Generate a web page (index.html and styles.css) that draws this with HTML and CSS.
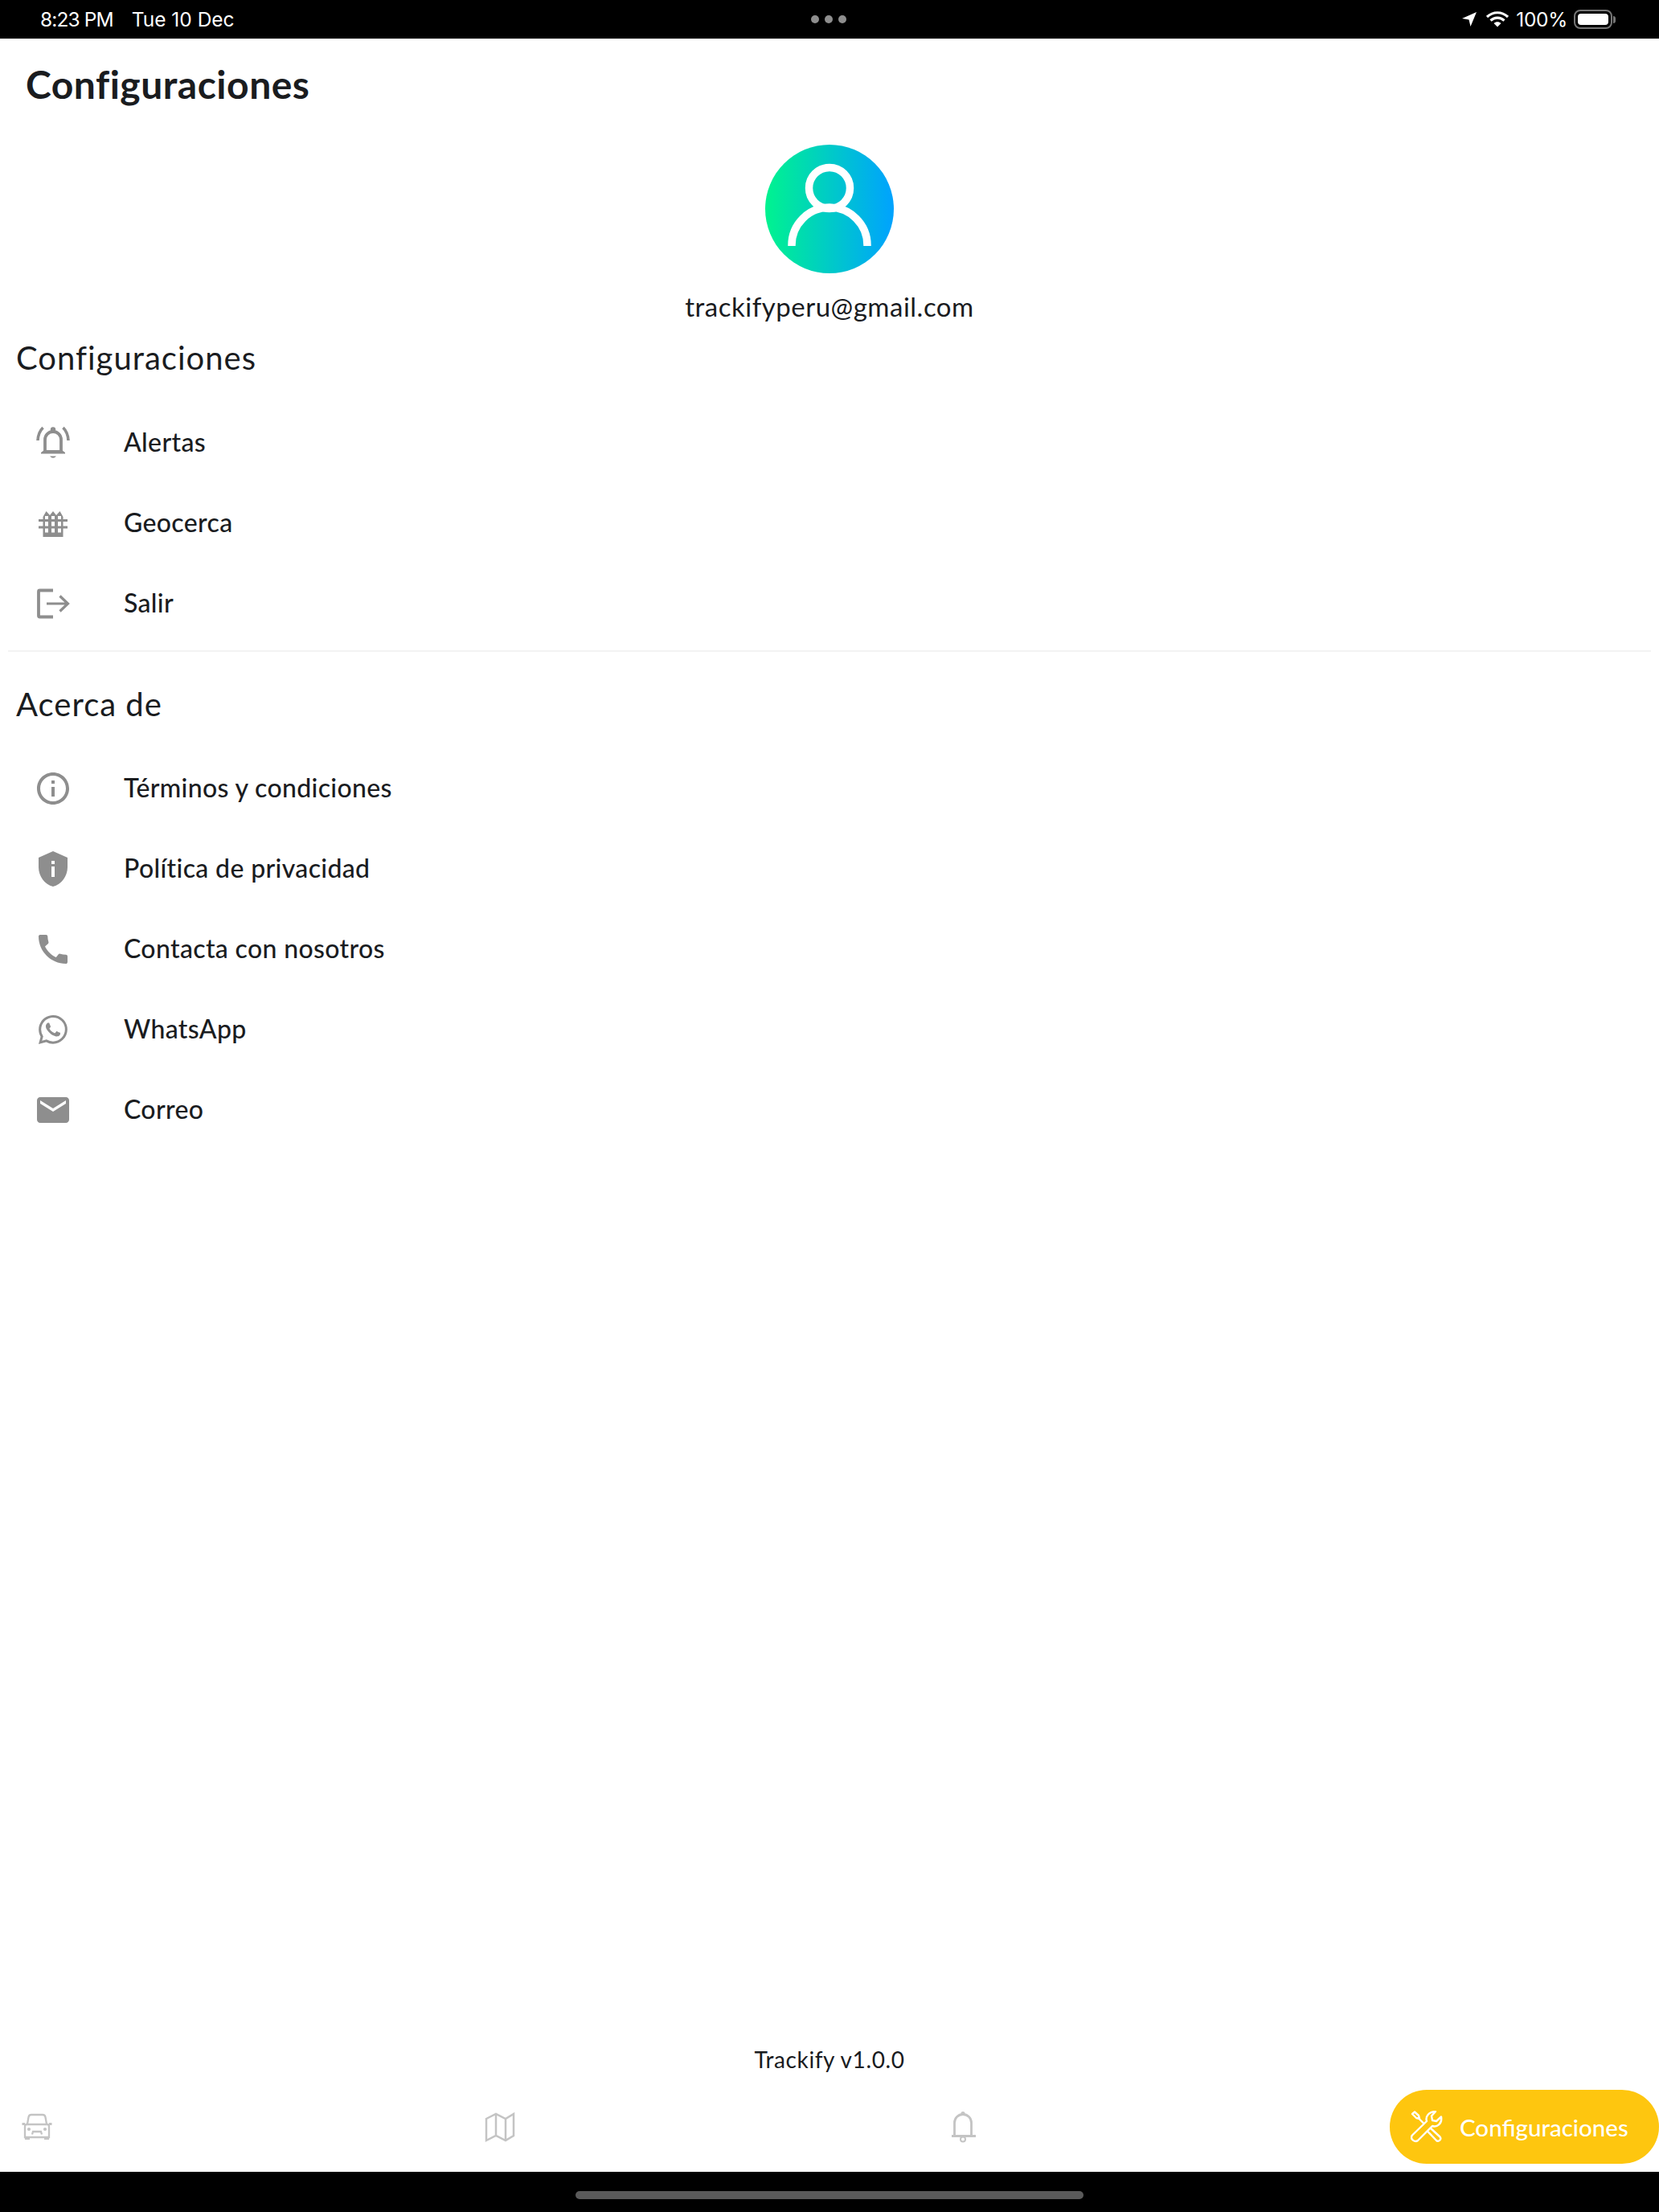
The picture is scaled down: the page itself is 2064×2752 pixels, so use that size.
FILE: index.html
```html
<!DOCTYPE html>
<html lang="en">
<head>
  <meta charset="UTF-8">
  <title>Trackify - Configuraciones</title>
  <link rel="stylesheet" href="styles.css">
</head>
<body>
  <div class="page">
    <div class="status-bar">
      <div class="status-left"><span class="status-time">8:23 PM</span><span>Tue 10 Dec</span></div>
      <div class="status-dots"><i></i><i></i><i></i></div>
      <div class="status-right">
        <svg class="status-arrow" viewBox="0 0 18 18"><path d="M18 0 L0 8 L8.5 9.5 L10.5 18 Z" fill="#fff"/></svg>
        <svg class="status-wifi" viewBox="0 0 28 20"><path d="M1 7 C8.5 0 19.5 0 27 7 M5.5 11.5 C10.5 7 17.5 7 22.5 11.5" fill="none" stroke="#fff" stroke-width="3.2"/><path d="M9.5 15 C12 12.6 16 12.6 18.5 15 L14 19.5 Z" fill="#fff"/></svg>
        <span class="status-pct">100%</span>
        <div class="battery"><div class="battery-fill"></div></div>
        <div class="battery-nub"></div>
      </div>
    </div>

    <div class="header"><h1 class="title">Configuraciones</h1></div>

    <div class="profile">
      <svg class="avatar" viewBox="0 0 160 160">
        <defs>
          <linearGradient id="avatarGrad" x1="0" y1="0" x2="1" y2="0">
            <stop offset="0" stop-color="#00f38f"/>
            <stop offset="1" stop-color="#00a2ff"/>
          </linearGradient>
        </defs>
        <circle cx="80" cy="80" r="80" fill="url(#avatarGrad)"/>
        <circle cx="80" cy="54" r="25.5" fill="none" stroke="#fff" stroke-width="9.5"/>
        <path d="M33 126 V125 A47 47 0 0 1 127 125 V126" fill="none" stroke="#fff" stroke-width="9.5"/>
      </svg>
      <div class="email">trackifyperu@gmail.com</div>
    </div>

    <h2 class="section-title">Configuraciones</h2>
    <div class="rows">
      <div class="row">
        <svg class="row-icon" viewBox="0 0 48 48">
          <path d="M14 36 V20 A10 10 0 0 1 34 20 V36" fill="none" stroke="#8e8e8e" stroke-width="3.8"/>
          <path d="M9 36 L13 33 H35 L39 36 V37.5 H9 Z" fill="#8e8e8e"/>
          <circle cx="24" cy="7.5" r="3.2" fill="#8e8e8e"/>
          <path d="M20 40.5 H28 Q24 45 20 40.5 Z" fill="#8e8e8e"/>
          <path d="M5 21 Q5.5 11 11.5 5 M43 21 Q42.5 11 36.5 5" fill="none" stroke="#8e8e8e" stroke-width="3.6"/>
        </svg>
        <span>Alertas</span>
      </div>
      <div class="row">
        <svg class="row-icon" viewBox="0 0 48 48">
          <path d="M11.5 41 V16 L15.5 9 L20 14 L24 9 L28 14 L32.5 9 L36.5 16 V41 Z" fill="#8e8e8e"/>
          <path d="M6 19 H42 V22 H6 Z M6 27.5 H42 V30.5 H6 Z" fill="#8e8e8e"/>
          <path d="M14 15 H18 V19 H14 Z M22 15 H26 V19 H22 Z M30 15 H34 V19 H30 Z M14 22 H18 V27.5 H14 Z M22 22 H26 V27.5 H22 Z M30 22 H34 V27.5 H30 Z M14 30.5 H18 V35.5 H14 Z M22 30.5 H26 V35.5 H22 Z M30 30.5 H34 V35.5 H30 Z" fill="#fff"/>
        </svg>
        <span>Geocerca</span>
      </div>
      <div class="row">
        <svg class="row-icon" viewBox="0 0 48 48">
          <path d="M24 7.5 H7.5 A1.5 1.5 0 0 0 6 9 V39 A1.5 1.5 0 0 0 7.5 40.5 H24" fill="none" stroke="#8e8e8e" stroke-width="3.8"/>
          <path d="M16 24 H42 M32.5 14.5 L42.5 24 L32.5 33.5" fill="none" stroke="#8e8e8e" stroke-width="3.2"/>
        </svg>
        <span>Salir</span>
      </div>
    </div>

    <div class="divider"></div>

    <h2 class="section-title section-about">Acerca de</h2>
    <div class="rows">
      <div class="row">
        <svg class="row-icon" viewBox="0 0 24 24"><path fill="#8e8e8e" d="M11 7h2v2h-2zm0 4h2v6h-2zm1-9C6.48 2 2 6.48 2 12s4.48 10 10 10 10-4.48 10-10S17.52 2 12 2zm0 18c-4.41 0-8-3.59-8-8s3.59-8 8-8 8 3.59 8 8-3.59 8-8 8z"/></svg>
        <span>Términos y condiciones</span>
      </div>
      <div class="row">
        <svg class="row-icon" viewBox="0 0 24 24"><path fill="#8e8e8e" fill-rule="evenodd" d="M12 1L3 5v6c0 5.55 3.84 10.74 9 12 5.16-1.26 9-6.45 9-12V5l-9-4zM11 7h2v2h-2zM11 10.5h2V17h-2z"/></svg>
        <span>Política de privacidad</span>
      </div>
      <div class="row">
        <svg class="row-icon" viewBox="0 0 24 24"><path fill="#8e8e8e" d="M20.01 15.38c-1.23 0-2.42-.2-3.53-.56-.35-.12-.74-.03-1.01.24l-1.57 1.97c-2.83-1.35-5.48-3.9-6.89-6.83l1.95-1.66c.27-.28.35-.67.24-1.02-.37-1.11-.56-2.3-.56-3.53 0-.54-.45-.99-.99-.99H4.19C3.65 3 3 3.24 3 3.99 3 13.28 10.73 21 20.01 21c.71 0 .99-.63.99-1.18v-3.45c0-.54-.45-.99-.99-.99z"/></svg>
        <span>Contacta con nosotros</span>
      </div>
      <div class="row">
        <svg class="row-icon" viewBox="-2.67 -2.67 21.33 21.33"><path fill="#8e8e8e" d="M13.601 2.326A7.854 7.854 0 0 0 7.994 0C3.627 0 .068 3.558.064 7.926c0 1.399.366 2.76 1.057 3.965L0 16l4.204-1.102a7.933 7.933 0 0 0 3.79.965h.004c4.368 0 7.926-3.558 7.93-7.93A7.898 7.898 0 0 0 13.6 2.326zM7.994 14.521a6.573 6.573 0 0 1-3.356-.92l-.24-.144-2.494.654.666-2.433-.156-.251a6.56 6.56 0 0 1-1.007-3.505c0-3.626 2.957-6.584 6.591-6.584a6.56 6.56 0 0 1 4.66 1.931 6.557 6.557 0 0 1 1.928 4.66c-.004 3.639-2.961 6.592-6.592 6.592zm3.615-4.934c-.197-.099-1.17-.578-1.353-.646-.182-.065-.315-.099-.445.099-.133.197-.513.646-.627.775-.114.133-.232.148-.43.05-.197-.1-.836-.308-1.592-.985-.59-.525-.985-1.175-1.103-1.372-.114-.198-.011-.304.088-.403.087-.088.197-.232.296-.346.1-.114.133-.198.198-.33.065-.134.034-.248-.015-.347-.05-.099-.445-1.076-.612-1.47-.16-.389-.323-.335-.445-.34-.114-.007-.247-.007-.38-.007a.729.729 0 0 0-.529.247c-.182.198-.691.677-.691 1.654 0 .977.71 1.916.81 2.049.098.133 1.394 2.132 3.383 2.992.47.205.84.326 1.129.418.475.152.904.129 1.246.08.38-.058 1.171-.48 1.338-.943.164-.464.164-.86.114-.943-.049-.084-.182-.133-.38-.232z"/></svg>
        <span>WhatsApp</span>
      </div>
      <div class="row">
        <svg class="row-icon" viewBox="0 0 24 24"><path fill="#8e8e8e" d="M20 4H4c-1.1 0-2 .9-2 2v12c0 1.1.9 2 2 2h16c1.1 0 2-.9 2-2V6c0-1.1-.9-2-2-2zm0 4l-8 5-8-5V6l8 5 8-5v2z"/></svg>
        <span>Correo</span>
      </div>
    </div>

    <div class="version">Trackify v1.0.0</div>

    <div class="tab-bar">
      <svg class="tab-icon" viewBox="0 0 48 48">
        <g fill="none" stroke="#c4c4c4" stroke-width="2.3">
          <path d="M12 20.5 L13.5 12 Q14 9 17 9 H31 Q34 9 34.5 12 L36 20.5"/>
          <path d="M11 21 H37 Q39 21 39 24 V37 H9 V24 Q9 21 11 21 Z"/>
          <path d="M18 33.5 L19 30 H29 L30 33.5"/>
        </g>
        <path d="M5.5 19 H9 V22 H5.5 Z M39 19 H42.5 V22 H39 Z M9 36 H15 V40 H9 Z M33 36 H39 V40 H33 Z" fill="#c4c4c4"/>
        <circle cx="14" cy="27" r="2.1" fill="#c4c4c4"/>
        <circle cx="34" cy="27" r="2.1" fill="#c4c4c4"/>
      </svg>
      <svg class="tab-icon" viewBox="0 0 48 48">
        <path d="M7 14 L19 8 L31 14 L41 8 V35 L31 41 L19 35 L7 41 Z M19 8 V35 M31 14 V41" fill="none" stroke="#c4c4c4" stroke-width="2.5"/>
      </svg>
      <svg class="tab-icon" viewBox="0 0 48 48">
        <path d="M13.5 35 V19 A10.5 10.5 0 0 1 34.5 19 V35 M10 35.5 H40" fill="none" stroke="#c4c4c4" stroke-width="2.8"/>
        <circle cx="24" cy="7.5" r="2.6" fill="#c4c4c4"/>
        <circle cx="24" cy="39.5" r="3" fill="none" stroke="#c4c4c4" stroke-width="2"/>
      </svg>
      <div class="tab-active">
        <svg class="tab-tools" viewBox="0 0 40 40">
          <g fill="none" stroke="#fff" stroke-width="2.4" stroke-linejoin="round">
            <path d="M2 4 L5 1.5 L10 6 L11 10 L7 9 Z M10.5 10 L16.5 16"/>
            <path d="M24 21 L36.5 32.5 A3.2 3.2 0 0 1 32 37 L20.5 25"/>
            <path d="M2 30.5 L20 13 C18 7 23 1 31 1 L26 6.5 L27 12 L32 13 L38 7.5 C39.5 16 33 21 27 19 L9 37 C5.5 40 -1.5 35 2 30.5 Z"/>
          </g>
        </svg>
        <span>Configuraciones</span>
      </div>
    </div>

    <div class="home-bar"><div class="home-indicator"></div></div>
  </div>
</body>
</html>
```

FILE: styles.css
```css
* {
  box-sizing: border-box;
  margin: 0;
  padding: 0;
}
body {
  font-family: Lato, "Open Sans", sans-serif;
  background-color: #fff;
  color: #1a1c1f;
}
.page {
  display: flex;
  flex-direction: column;
  width: 2064px;
  height: 2752px;
  overflow: hidden;
}

/* status bar */
.status-bar {
  display: grid;
  grid-template-columns: 1fr auto 1fr;
  align-items: center;
  height: 48px;
  padding: 0 54px 0 50px;
  background-color: #000;
  color: #fff;
  font-family: Inter, sans-serif;
  font-size: 24.5px;
}
.status-left {
  display: flex;
  gap: 23px;
}
.status-time {
  letter-spacing: -0.9px;
}
.status-dots {
  display: flex;
  gap: 7px;
  margin-left: 2px;
}
.status-dots i {
  width: 10px;
  height: 10px;
  border-radius: 50%;
  background-color: #8e8e8e;
}
.status-right {
  display: flex;
  align-items: center;
  justify-content: flex-end;
}
.status-arrow {
  width: 18px;
  height: 18px;
  margin-right: 12px;
}
.status-wifi {
  width: 28px;
  height: 20px;
  margin-right: 9px;
}
.status-pct {
  margin-right: 8px;
  letter-spacing: -0.3px;
}
.battery {
  width: 48px;
  height: 24px;
  padding: 3px;
  border: 2px solid #757575;
  border-radius: 8px;
}
.battery-fill {
  height: 100%;
  background-color: #fff;
  border-radius: 4px;
}
.battery-nub {
  width: 3px;
  height: 9px;
  margin-left: 1px;
  background-color: #757575;
  border-radius: 0 3px 3px 0;
}

/* header */
.header {
  display: flex;
  align-items: center;
  height: 114px;
  padding: 0 0 2px 32px;
}
.title {
  font-size: 48px;
  font-weight: 700;
  letter-spacing: 0.5px;
}
.profile {
  display: flex;
  flex-direction: column;
  align-items: center;
  padding-top: 18px;
}
.avatar {
  width: 160px;
  height: 160px;
}
.email {
  margin: 19px 0 2px;
  font-size: 33px;
  line-height: 44px;
  letter-spacing: 0.5px;
}

/* lists */
.section-title {
  height: 84px;
  margin-bottom: 12px;
  padding-left: 20px;
  font-size: 40px;
  font-weight: 400;
  line-height: 80px;
  letter-spacing: 1px;
}
.section-about {
  margin-top: 25px;
  margin-bottom: 11px;
}
.rows {
  display: flex;
  flex-direction: column;
}
.row {
  display: flex;
  align-items: center;
  height: 100px;
  padding-left: 42px;
  gap: 64px;
  font-size: 32px;
  font-weight: 500;
  letter-spacing: 0.35px;
}
.row span {
  margin-bottom: 4px;
}
.row-icon {
  width: 48px;
  height: 48px;
  flex-shrink: 0;
}
.divider {
  height: 2px;
  margin: 8px 10px 0;
  background-color: #f3f3f3;
}

/* bottom */
.version {
  margin-top: auto;
  height: 40px;
  margin-bottom: 18px;
  font-size: 28px;
  line-height: 40px;
  text-align: center;
  letter-spacing: 0.6px;
}
.tab-bar {
  display: flex;
  align-items: center;
  height: 92px;
  padding-left: 22px;
  gap: 528px;
}
.tab-icon {
  width: 48px;
  height: 48px;
  flex-shrink: 0;
}
.tab-active {
  display: flex;
  align-items: center;
  width: 335px;
  height: 92px;
  margin-left: -21px;
  padding-left: 26px;
  gap: 21px;
  background-color: #fec60f;
  border-radius: 46px;
  color: #fff;
  font-size: 29.5px;
  font-weight: 500;
}
.tab-tools {
  width: 40px;
  height: 40px;
}
.home-bar {
  display: flex;
  align-items: flex-start;
  justify-content: center;
  height: 50px;
  margin-top: 10px;
  padding-top: 24px;
  background-color: #000;
}
.home-indicator {
  width: 632px;
  height: 10px;
  border-radius: 5px;
  background-color: #5a5a5a;
}
```
